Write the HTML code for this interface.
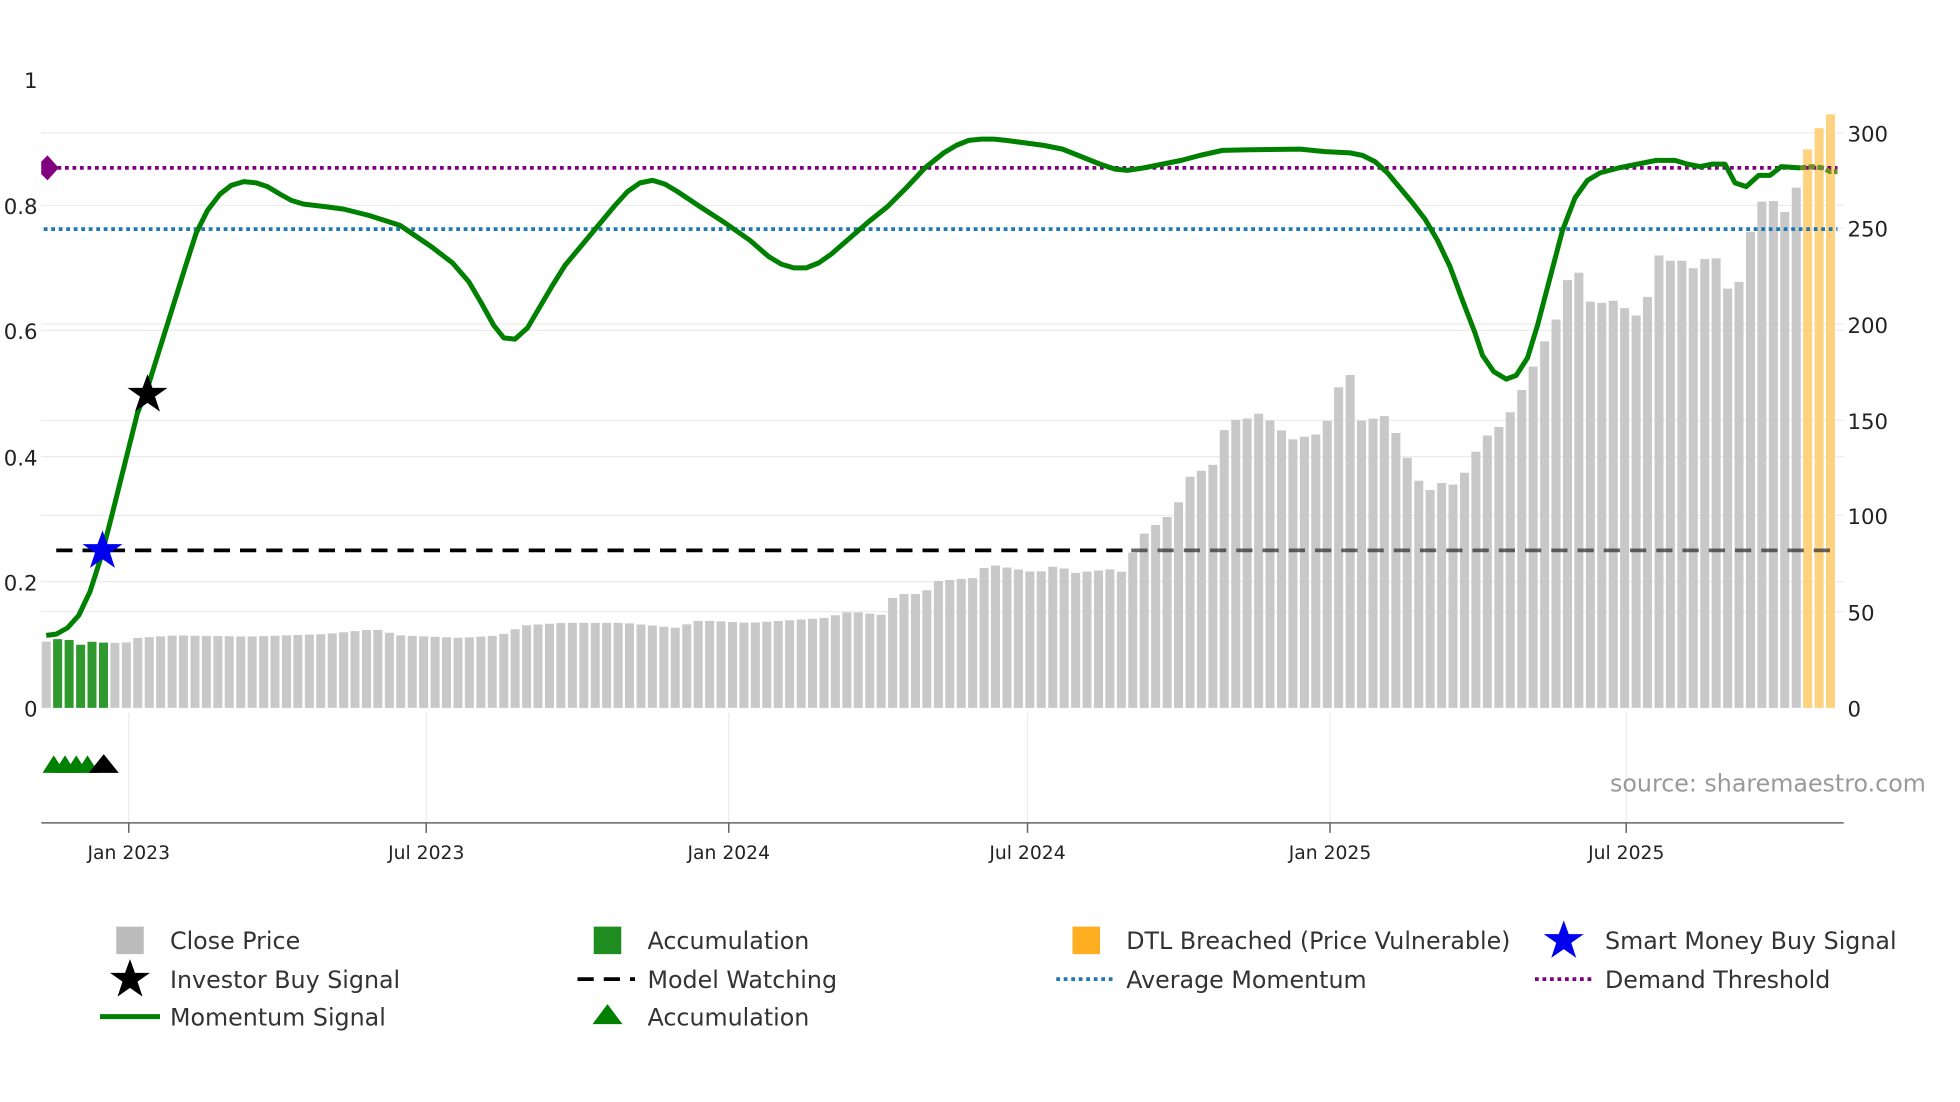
<!DOCTYPE html>
<html><head><meta charset="utf-8"><style>
html,body{margin:0;padding:0;background:#fff;}
svg{display:block;}
text{font-family:"DejaVu Sans","Liberation Sans",sans-serif;}
</style></head><body>
<svg id="s" width="1960" height="1102" viewBox="0 0 1568 881" xmlns="http://www.w3.org/2000/svg">
<g stroke="#ececec" stroke-width="1">
<line x1="33" x2="1475" y1="106" y2="106"/><line x1="33" x2="1475" y1="164" y2="164"/>
<line x1="33" x2="1475" y1="182" y2="182"/><line x1="33" x2="1475" y1="259" y2="259"/>
<line x1="33" x2="1475" y1="264" y2="264"/><line x1="33" x2="1475" y1="336" y2="336"/>
<line x1="33" x2="1475" y1="365" y2="365"/><line x1="33" x2="1475" y1="412" y2="412"/>
<line x1="33" x2="1475" y1="465" y2="465"/><line x1="33" x2="1475" y1="489" y2="489"/>
<line x1="103" x2="103" y1="570" y2="658"/><line x1="341" x2="341" y1="570" y2="658"/>
<line x1="583" x2="583" y1="570" y2="658"/><line x1="822" x2="822" y1="570" y2="658"/>
<line x1="1064" x2="1064" y1="570" y2="658"/><line x1="1301" x2="1301" y1="570" y2="658"/>
</g>
<g fill="#222" font-size="17">
<text x="30" y="70" text-anchor="end">1</text>
<text x="30" y="171" text-anchor="end">0.8</text>
<text x="30" y="271" text-anchor="end">0.6</text>
<text x="30" y="372" text-anchor="end">0.4</text>
<text x="30" y="472" text-anchor="end">0.2</text>
<text x="30" y="573" text-anchor="end">0</text>
<text x="1478" y="113">300</text><text x="1478" y="189">250</text>
<text x="1478" y="266">200</text><text x="1478" y="343">150</text>
<text x="1478" y="419">100</text><text x="1478" y="496">50</text>
<text x="1478" y="573">0</text>
</g>
<line x1="45" x2="905" y1="440" y2="440" stroke="#000" stroke-width="3" stroke-dasharray="13,8"/>
<g id="bars"></g>
<line x1="905" x2="1470" y1="440" y2="440" stroke="#333" stroke-opacity="0.75" stroke-width="3" stroke-dasharray="13,8"/>
<line x1="35" x2="1470" y1="183" y2="183" stroke="#1f77b4" stroke-width="3" stroke-dasharray="3,3"/>
<line x1="40" x2="1470" y1="134" y2="134" stroke="#800080" stroke-width="3" stroke-dasharray="3,3"/>
<polygon points="38,124 47,134 38,144 33,139 33,129" fill="#800080"/>
<polyline id="mom" fill="none" stroke="#008000" stroke-width="4" stroke-linejoin="round"/>
<polyline points="1440,134 1450,133 1458,134 1464,137 1470,137" fill="none" stroke="#6b8e23" stroke-width="4" stroke-dasharray="5,2"/>
<polygon points="118,299 122,310 134,310 124,317 128,329 118,322 108,329 112,317 102,310 114,310" fill="#000"/>
<polygon points="82,424 86,435 98,435 88,442 92,454 82,447 72,454 76,442 66,435 78,435" fill="#0000ee"/>
<g fill="#008000">
<polygon points="34,618 43,604 52,618"/><polygon points="43,618 52,604 61,618"/>
<polygon points="52,618 61,604 70,618"/><polygon points="61,618 70,604 79,618"/>
</g>
<polygon points="71,618 83,603 95,618" fill="#000"/>
<text x="1288" y="633" fill="#999" font-size="19">source: sharemaestro.com</text>
<line x1="33" x2="1475" y1="658" y2="658" stroke="#666" stroke-width="1.2"/>
<g stroke="#666" stroke-width="1.2">
<line x1="103" x2="103" y1="658" y2="666"/><line x1="341" x2="341" y1="658" y2="666"/>
<line x1="583" x2="583" y1="658" y2="666"/><line x1="822" x2="822" y1="658" y2="666"/>
<line x1="1064" x2="1064" y1="658" y2="666"/><line x1="1301" x2="1301" y1="658" y2="666"/>
</g>
<g fill="#222" font-size="15" text-anchor="middle">
<text x="103" y="687">Jan 2023</text><text x="341" y="687">Jul 2023</text>
<text x="583" y="687">Jan 2024</text><text x="822" y="687">Jul 2024</text>
<text x="1064" y="687">Jan 2025</text><text x="1301" y="687">Jul 2025</text>
</g>
<g fill="#333" font-size="19">
<rect x="93" y="741" width="22" height="22" fill="#bbb"/><text x="136" y="759">Close Price</text>
<rect x="475" y="741" width="22" height="22" fill="#1e8c1e"/><text x="518" y="759">Accumulation</text>
<rect x="858" y="741" width="22" height="22" fill="#ffad21"/><text x="901" y="759">DTL Breached (Price Vulnerable)</text>
<polygon points="1251,736 1255,747 1267,747 1257,754 1261,766 1251,759 1241,766 1245,754 1235,747 1247,747" fill="#0000ee"/><text x="1284" y="759">Smart Money Buy Signal</text>
<polygon points="104,767 108,778 120,778 110,785 114,797 104,790 94,797 98,785 88,778 100,778" fill="#000"/><text x="136" y="790">Investor Buy Signal</text>
<line x1="462" x2="508" y1="783" y2="783" stroke="#000" stroke-width="3" stroke-dasharray="13,8"/><text x="518" y="790">Model Watching</text>
<line x1="845" x2="891" y1="783" y2="783" stroke="#1f77b4" stroke-width="3" stroke-dasharray="3,3"/><text x="901" y="790">Average Momentum</text>
<line x1="1228" x2="1274" y1="783" y2="783" stroke="#800080" stroke-width="3" stroke-dasharray="3,3"/><text x="1284" y="790">Demand Threshold</text>
<line x1="80" x2="128" y1="813" y2="813" stroke="#008000" stroke-width="4"/><text x="136" y="820">Momentum Signal</text>
<polygon points="474,819 486,803 498,819" fill="#008000"/><text x="518" y="820">Accumulation</text>
</g>
</svg>
<script>
var kp=[[37,513],[45,511],[54,511],[63,516],[72,513],[86,514],[100,514],[110,510],[140,508],[200,509],[260,507],[300,503],[320,508],[370,510],[400,508],[420,500],[450,498],[500,498],[540,502],[560,496],[600,498],[660,494],[680,489],[710,492],[715,475],[740,475],[745,465],[780,462],[790,451],[830,458],[845,452],[860,458],[890,455],[900,458],[910,432],[920,422],[930,417],[938,409],[947,395],[956,370],[965,381],[974,365],[983,330],[992,339],[1001,332],[1010,330],[1020,340],[1029,347],[1038,354],[1047,346],[1056,348],[1065,330],[1074,299],[1083,300],[1093,358],[1102,319],[1111,341],[1120,349],[1129,375],[1138,389],[1147,393],[1157,382],[1166,391],[1175,370],[1184,356],[1193,344],[1202,340],[1212,323],[1221,304],[1230,286],[1239,265],[1248,250],[1258,206],[1267,227],[1276,251],[1285,236],[1294,243],[1303,248],[1313,255],[1322,223],[1331,190],[1340,221],[1349,200],[1358,223],[1368,195],[1377,216],[1386,242],[1395,213],[1404,166],[1414,157],[1423,164],[1432,174],[1441,130],[1450,111],[1459,96],[1468,88]];
function f(x){for(var i=0;i<kp.length-1;i++){if(x<=kp[i+1][0]){var a=kp[i],b=kp[i+1];return a[1]+(b[1]-a[1])*(x-a[0])/(b[0]-a[0]);}}return kp[kp.length-1][1];}
var g=document.getElementById('bars'),h='';
for(var x=37;x<=1469;x+=9.15){var y=f(x);var c='#c8c8c8';
if(x>40&&x<88)c='#2e9a2e'; if(x>1437)c='#ffd27f';
h+='<rect x="'+(x-3.6).toFixed(1)+'" y="'+y.toFixed(1)+'" width="7.2" height="'+(566-y).toFixed(1)+'" fill="'+c+'"/>';}
g.innerHTML=h;
var m=[[37,508],[45,507],[54,502],[63,492],[72,473],[81,445],[90,410],[100,370],[110,330],[118,310],[128,278],[138,246],[148,214],[157,186],[166,168],[176,155],[185,148],[195,145],[205,146],[214,149],[224,155],[233,160],[243,163],[260,165],[275,167],[295,172],[320,180],[345,197],[362,210],[375,225],[385,242],[395,260],[403,270],[412,271],[422,262],[432,245],[442,228],[452,212],[462,200],[472,188],[482,176],[492,164],[502,153],[512,146],[522,144],[532,147],[542,153],[560,165],[580,178],[600,192],[615,205],[625,211],[635,214],[645,214],[655,210],[665,203],[680,190],[695,177],[710,165],[725,150],[740,134],[755,122],[765,116],[775,112],[785,111],[795,111],[805,112],[820,114],[835,116],[850,119],[865,125],[880,131],[892,135],[902,136],[915,134],[930,131],[945,128],[960,124],[978,120],[1000,119.5],[1040,119],[1060,121],[1080,122],[1090,124],[1100,129],[1110,138],[1120,150],[1130,162],[1140,175],[1150,192],[1160,213],[1170,240],[1180,266],[1186,284],[1195,297],[1205,303],[1213,300],[1222,286],[1230,260],[1240,222],[1250,184],[1260,158],[1270,144],[1280,138],[1295,134],[1310,131],[1325,128],[1340,128],[1350,131],[1360,133],[1370,131],[1380,131],[1388,146],[1397,149],[1407,140],[1416,140],[1425,133],[1440,134]];
document.getElementById('mom').setAttribute('points',m.map(function(p){return p.join(',')}).join(' '));
</script>
</body></html>
